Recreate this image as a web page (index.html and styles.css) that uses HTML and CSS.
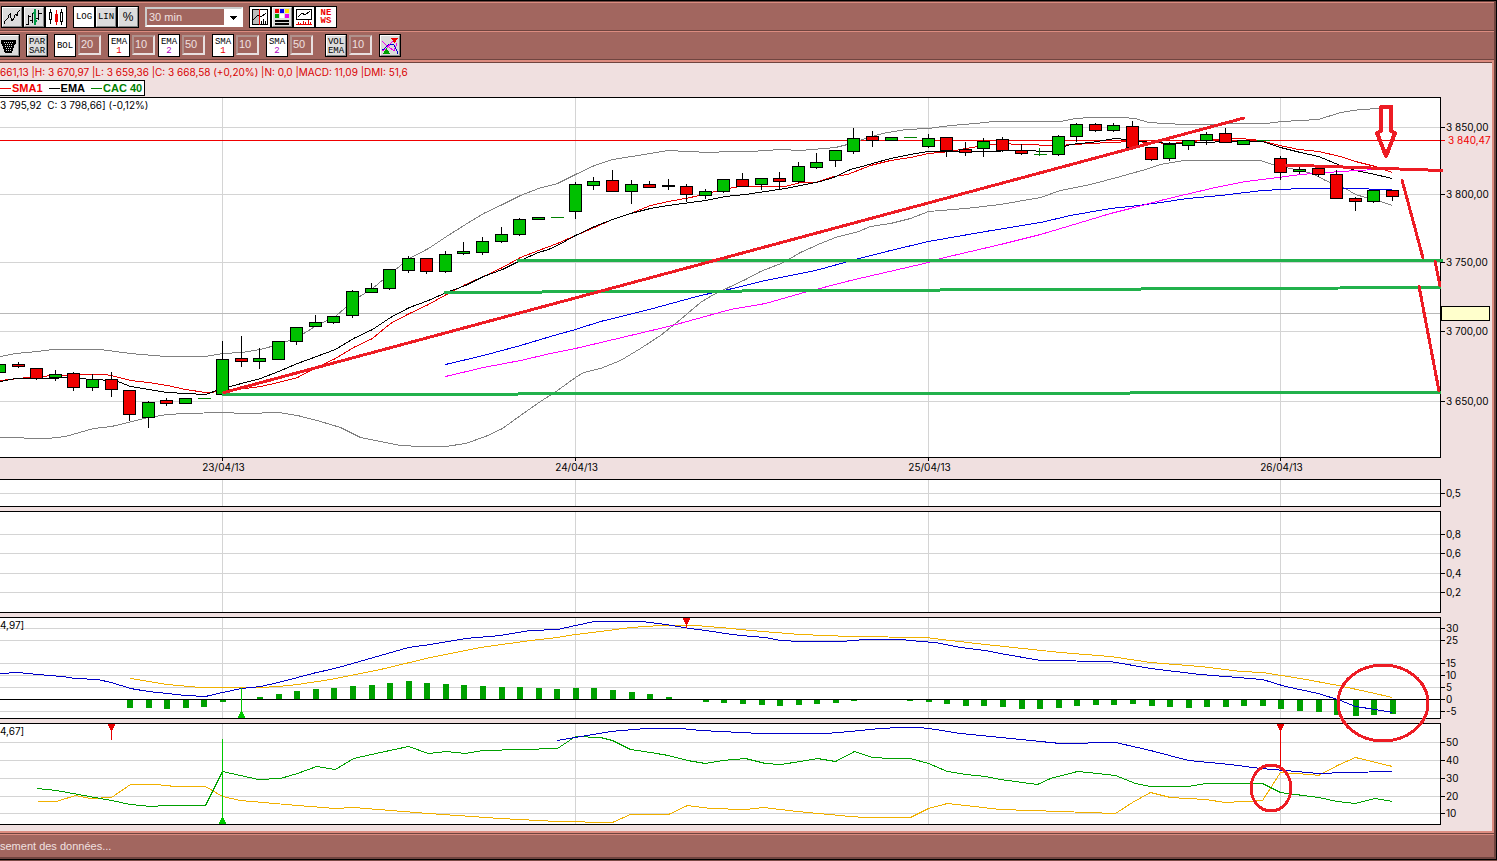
FILE: index.html
```
<!DOCTYPE html>
<html lang="fr">
<head>
<meta charset="utf-8">
<title>CAC 40</title>
<link rel="stylesheet" href="styles.css">
</head>
<body>
<div class="app">
  <div class="toolbar" role="toolbar" aria-label="Affichage">
    <div class="group">
      <button class="tool" aria-label="Courbe"><svg viewBox="0 0 18 18"><path d="M1 16V13H2L5 10V8L7 6V9L8 10L9 13L11 10V8L13 6L14 8V5L17 2" class="ink"/></svg></button>
      <button class="tool" aria-label="Barres"><svg viewBox="0 0 18 18"><path d="M3.5 7V17M1 16.5H3M4 8.5H6M7.5 5V15M5 12.500H7M13.500 2V12M11 10.500H13M14 5.500H17" class="ink"/><path d="M10 1V17M8 5H10M10 13H12" class="bar-green"/></svg></button>
      <button class="tool on" aria-label="Chandeliers"><svg viewBox="0 0 18 18"><path d="M3.500 1V4M3.500 12V16M2.500 4.500H4.500V11.500H2.500ZM14.500 1V4M14.500 13V17M13.500 4.500H15.500V13.500H13.500Z" class="ink"/><path d="M9.500 2V17" class="ink-red"/><path d="M8 6H11V14H8Z" class="fill-red"/></svg></button>
    </div>
    <div class="group group-scale">
      <button class="tool on wide">LOG</button>
      <button class="tool wide">LIN</button>
      <button class="tool percent">%</button>
    </div>
    <select class="period" aria-label="Période"><option>30 min</option></select>
    <div class="group group-view">
      <button class="tool on" aria-label="Curseur"><svg viewBox="0 0 18 18"><path d="M2 2H8V16H2Z" class="fill-gray"/><path d="M1.500 1.500H16.500V16.500H1.500ZM2 12L7 7L10 9L15 5M10.500 13V16M12.500 11V16M14.500 13V16" class="ink"/><path d="M8.500 1V17" class="ink-red"/></svg></button>
      <button class="tool" aria-label="Couleurs"><svg viewBox="0 0 18 18"><path d="M2 1H6V5H2Z" class="fill-red"/><path d="M7 1H11V5H7Z" class="fill-blue"/><path d="M12 1H16V5H12Z" class="fill-yellow"/><path d="M2 6H6V10H2Z" class="fill-green"/><path d="M7 6H11V10H7Z" class="fill-white"/><path d="M12 6H16V10H12Z" class="fill-magenta"/><path d="M2 12H16V14H2ZM2 15H16V17H2Z"/></svg></button>
      <button class="tool on" aria-label="Volume"><svg viewBox="0 0 18 18"><path d="M1.500 1.500H16.500V11.500H1.500ZM3 9L7 5L10 7L15 3" class="ink"/><path d="M1 16.500H17M3.500 14V16M5.500 15V16M8.500 13V16M10.500 14V16M13.500 12V16M15.500 14V16" class="ink-red"/></svg></button>
      <button class="tool on news" aria-label="News"><span>NE</span><span>WS</span></button>
    </div>
  </div>

  <div class="toolbar indicators" role="toolbar" aria-label="Indicateurs">
    <button class="tool bin" aria-label="Effacer"><svg viewBox="0 0 18 18"><path d="M1 3H16V7H15L12 16H5L2 7H1Z"/><path d="M4 5.500H13M5 7.500H13M5 9.500H12M6 11.500H12M6 13.500H11" class="mesh"/></svg></button>
    <button class="tool two"><span>PAR</span><span>SAR</span></button>
    <div class="field"><button class="tool on wide">BOL</button><input value="20" aria-label="Bollinger"></div>
    <div class="group-avg">
      <div class="field"><button class="tool on two"><span>EMA</span><span class="one">1</span></button><input value="10" aria-label="EMA 1"></div>
      <div class="field"><button class="tool on two"><span>EMA</span><span class="second">2</span></button><input value="50" aria-label="EMA 2"></div>
    </div>
    <div class="field"><button class="tool on two"><span>SMA</span><span class="one">1</span></button><input value="10" aria-label="SMA 1"></div>
    <div class="field"><button class="tool on two"><span>SMA</span><span class="second">2</span></button><input value="50" aria-label="SMA 2"></div>
    <div class="field volume"><button class="tool two"><span>VOL</span><span>EMA</span></button><input value="10" aria-label="Volume EMA"></div>
    <button class="tool" aria-label="Signaux"><svg viewBox="0 0 18 18"><path d="M1 4L4 7L13 14L16 6" class="ink-magenta"/><path d="M1 12H3L7 8L10 7L13 8L16 14V17" class="ink-blue"/><path d="M1 14L5 12L11 5L15 3" class="ink-magenta"/><path d="M10 1H17L13.500 6Z" class="fill-red"/><path d="M2 17H9L5.500 11Z" class="fill-green"/></svg></button>
  </div>

  <main class="workspace">
    <div class="readout">661,13 |H: 3 670,97 |L: 3 659,36 |C: 3 668,58 (+0,20%) |N: 0,0 |MACD: 11,09 |DMI: 51,6</div>
    <div class="legend">
      <span class="key key-sma">SMA1</span>
      <span class="key key-ema">EMA</span>
      <span class="key key-cac">CAC 40</span>
    </div>
    <svg class="chart" id="chart" viewBox="0 97 1492 734" role="img" aria-label="CAC 40, 30 min"></svg>
  </main>

  <footer class="status">sement des données...</footer>
</div>
<script src="chart.js"></script>
</body>
</html>
```
FILE: styles.css
```
* { box-sizing: border-box; }

body {
  margin: 0;
  padding-bottom: 1px;
  background: #7a4a45;
  font-family: "Liberation Sans", Arial, sans-serif;
  font-size: 11px;
  color: #000;
}

.app {
  display: flex;
  flex-direction: column;
  min-height: calc(100vh - 1px);
  border: solid #000;
  border-width: 1px 1px 1px 0;
  padding: 1px 2px 0 0;
  background: #6f443f;
  overflow: hidden;
}

.toolbar {
  display: flex;
  align-items: center;
  height: 29px;
  padding-left: 2px;
  background: #a2665f;
  border-top: 1px solid #dc8c80;
  border-bottom: 1px solid #6f443f;
}

.group { display: flex; gap: 2px; }
.group-scale { margin-left: 8px; }
.group-view { margin-left: 7px; }

.tool {
  display: flex;
  flex-direction: column;
  align-items: center;
  justify-content: center;
  width: 20px;
  height: 20px;
  padding: 0;
  border: 1px solid;
  border-color: #fff #888 #888 #fff;
  background: #dcdcdc;
  box-shadow: 0 0 0 1px #000;
  font: 9px/9px "Liberation Mono", monospace;
  color: #000;
}
.tool.on { background: #fff; border-color: #fff; }
.tool svg { width: 18px; height: 18px; display: block; shape-rendering: crispEdges; }
.wide, .two { padding-top: 2px; }
.percent { font: 12px/12px "Liberation Sans", Arial, sans-serif; }
.news { padding-top: 1px; color: #e00; font-weight: bold; line-height: 8px; }
.bin { margin-left: -1px; }
.one { color: #e00; }
.second { color: #b000c0; }

.ink, .ink-red, .ink-blue, .ink-magenta, .bar-green, .mesh { fill: none; stroke: #000; }
.ink-red { stroke: #e00; }
.ink-blue { stroke: #00c; }
.ink-magenta { stroke: #e0e; }
.bar-green { stroke: #009a46; stroke-width: 2; }
.mesh { stroke: #dcdcdc; stroke-dasharray: 1 1; }
.fill-red { fill: #e00; }
.fill-blue { fill: #00e; }
.fill-green { fill: #00a000; }
.fill-yellow { fill: #ffe000; }
.fill-magenta { fill: #e0e; }
.fill-white { fill: #fff; }
.fill-gray { fill: #bbb; }

.period {
  appearance: none;
  width: 98px;
  height: 20px;
  margin-left: 7px;
  padding: 0 2px;
  border: 2px solid #fff;
  border-color: #ccc #fff #fff #ccc;
  border-radius: 0;
  background:
    conic-gradient(from -45deg at 50% 100%, #000 90deg, transparent 0) no-repeat right 4px top 7px / 8px 4px,
    linear-gradient(to left, #fff 17px, #a2665f 17px);
  color: #f0e0e0;
  font: 11px "Liberation Sans", Arial, sans-serif;
}

.indicators { gap: 8px; padding-left: 0; }
.indicators .tool { height: 21px; }
.group-avg { display: flex; gap: 4px; }
.field { display: flex; gap: 3px; }
.field input {
  width: 23px;
  height: 20px;
  padding: 0 1px 2px;
  border: 2px solid;
  border-color: #b0918c #e8e0e0 #e8e0e0 #b0918c;
  background: #a2665f;
  color: #f0e0e0;
  font: 11px "Liberation Sans", Arial, sans-serif;
}
.volume { margin-left: 5px; }

.workspace {
  flex: 1;
  border: solid #dc8c80;
  border-width: 2px 2px 2px 0;
  background: #f0e0e0;
}
.readout {
  padding-top: 2px;
  border-top: 1px solid #6f443f;
  font: 10px/15px Inter, sans-serif;
  color: #d80000;
  white-space: pre;
}
.legend {
  display: flex;
  align-items: center;
  gap: 6px;
  width: max-content;
  height: 16px;
  margin-bottom: 1px;
  padding-right: 2px;
  border: 1px solid #000;
  border-left: 0;
  background: #fff;
  font-weight: bold;
}
.key { display: flex; align-items: center; gap: 1px; }
.key::before { content: ""; width: 11px; height: 1px; background: currentColor; }
.key-sma { color: #f00000; }
.key-cac { color: #008000; }

.chart { display: block; width: 100%; height: auto; font: 10px Inter, sans-serif; }
.chart .axis-text { fill: #000; }
.chart .price { fill: #f00000; }
.crisp { shape-rendering: crispEdges; }
.panel { fill: #fff; }
.frame { fill: none; stroke: #000; }
.grid { stroke: #d4d4d4; }
.tick, .wick { stroke: #000; }
.cursor { stroke: #b8b8b8; }
.last { stroke: #f00000; }
.tag { fill: #ffffcc; stroke: #000; }
.line { fill: none; stroke-width: 1; }
.band { stroke: #808080; }
.sma { stroke: #e80000; }
.ema { stroke: #000; }
.blue { stroke: #0000e8; }
.pink { stroke: #ff00ff; }
.orange { stroke: #f0b000; }
.green { stroke: #00a000; }
.navy { stroke: #0000c8; }
.body { stroke: #000; }
.up { fill: #00c000; }
.down { fill: #f00000; }
.flat { stroke: #008000; }
.histo { fill: #00a000; }
.sell { fill: #e80000; stroke: #e80000; }
.buy { fill: #00c800; stroke: #00c800; }
.pen { fill: none; stroke: #ed1c24; stroke-width: 3; stroke-linecap: round; }
.arrow { stroke-width: 4; stroke-linejoin: round; }
.level { fill: none; stroke: #22b14c; stroke-width: 3; }

.status {
  height: 26px;
  padding-top: 1px;
  border: solid #6f443f;
  border-width: 1px 0 2px;
  background: #a2665f;
  box-shadow: inset 0 1px #dc8c80;
  color: #f0e0e0;
  font-size: 11px;
  line-height: 23px;
}
```
FILE: chart.js
```
const RIGHT = 1440.5;
const barX = k => Math.round(222 + k * 18.57) + 0.5;

const panels = [
  { top: 97.5, bottom: 457.5, ticks: [[127.5, "3 850,00"], [194.5, "3 800,00"], [262.5, "3 750,00"], [331.5, "3 700,00"], [401.5, "3 650,00"]] },
  { top: 479.5, bottom: 506.5, ticks: [[493.5, "0,5"]] },
  { top: 511.5, bottom: 612.5, ticks: [[534.5, "0,8"], [553.5, "0,6"], [573.5, "0,4"], [592.5, "0,2"]] },
  { top: 617.5, bottom: 718.5, ticks: [[628.5, "30"], [640.5, "25"], [663.5, "15"], [675.5, "10"], [687.5, "5"], [699.5, "0"], [711.5, "-5"]] },
  { top: 723.5, bottom: 824.5, ticks: [[742.5, "50"], [760.5, "40"], [778.5, "30"], [796.5, "20"], [813.5, "10"]] }
];
const days = [[222.5, "23/04/13"], [575.5, "24/04/13"], [928.5, "25/04/13"], [1280.5, "26/04/13"]];

// One row per bar from index -12: direction, body top, body bottom, high, low
const candles = [
  ["up",364,372,357,372],["down",364,366,362,368],["down",368,378,368,380],["up",374,377,370,381],["down",373,387,372,391],
  ["up",379,387,374,391],["down",379,389,372,397],["down",390,414,390,421],["up",402,417,401,428],["down",400,403,398,406],
  ["up",398,403,398,403],["flat",398,398,398,398],
  ["up",359,394,341,394],["down",358,361,336,367],["up",358,361,348,369],["up",341,359,341,359],["up",327,341,327,345],
  ["up",322,326,315,326],["up",316,322,316,324],["up",291,315,290,318],["up",288,292,283,292],["up",269,288,269,290],
  ["up",258,270,256,273],["down",258,271,258,274],["up",254,271,251,273],["up",251,253,242,255],["up",241,252,237,255],
  ["up",234,241,227,243],["up",219,234,218,236],["up",217,219,217,219],["flat",217,217,217,217],
  ["up",184,211,182,219],["up",181,185,177,190],["down",180,191,170,191],["up",184,191,180,204],["down",184,187,181,187],
  ["down",185,186,179,190],["down",186,194,184,202],["up",191,195,189,199],["up",179,191,179,193],["down",179,186,173,186],
  ["up",178,184,178,190],["down",178,181,172,190],["up",166,181,162,183],["up",162,167,153,169],["up",150,160,150,167],
  ["up",138,151,128,154],["down",136,140,131,147],["up",137,140,137,140],["flat",137,137,137,137],
  ["up",138,146,134,148],["down",137,150,137,157],["down",149,152,142,156],["up",141,148,138,157],["down",139,150,137,152],
  ["down",150,153,144,155],["flat",154,154,148,156],["up",136,154,135,156],["up",124,136,123,142],["down",124,130,123,132],
  ["up",125,130,123,132],["down",126,147,121,147],["down",147,159,147,161],["up",144,158,142,161],["up",140,145,140,150],
  ["up",134,140,132,145],["down",133,142,128,142],["up",140,144,140,144],["flat",140,140,140,140],
  ["down",158,172,156,180],["up",169,171,167,174],["down",168,174,168,177],["down",174,198,170,198],["down",198,201,197,211],
  ["up",190,201,190,203],["down",190,196,190,201]
];

// MACD histogram ends, one per bar from index -5; 0 means no bar
const histogram = [708,708,709,708,707,702,0,697,694,691,689,688,686,685,683,681,683,684,685,686,687,687,688,689,688,688,690,692,694,697,
  0,702,703,704,705,706,705,704,703,701,0,0,701,702,704,706,706,707,709,709,708,706,705,705,704,706,707,708,707,707,706,706,709,711,712,715,716,715,714];

const priceLines = [
  ["band", "0,356 15,353 37,351 52,349 100,349 115,351 130,353 165,356 205,356 222,353 242,352 260,349 278,344 297,337 316,325 335,316 353,300 372,288 390,273 409,258 428,248 446,236 465,224 483,213 502,204 520,195 538,188 557,183 575,174 594,165 612,159 650,153 668,150 687,151 709,152 728,151 750,151 780,149 800,150 835,147 847,144 865,138 882,133 905,129 928,128 950,125 975,123 993,121 1060,121 1075,118 1090,117 1122,117 1135,118 1148,122 1165,123 1183,124 1265,123 1282,121 1318,119 1340,112 1360,109 1380,108"],
  ["band", "0,437 47,438 65,436 93,428 111,426 148,417 167,414 185,413 222,412 245,413 278,412 297,415 320,421 340,427 360,437 380,441 400,445 420,446 445,446 465,443 485,436 502,428 520,415 540,401 557,390 575,377 583,372 600,368 620,360 640,348 660,335 680,319 700,302 715,293 728,287 745,279 760,271 783,262 800,252 820,243 835,237 858,231 870,226 890,223 910,218 928,211 965,208 1000,204 1040,197 1060,190 1090,184 1120,176 1145,169 1160,164 1183,160 1260,160 1272,164 1290,168 1312,173 1325,180 1345,188 1355,194 1365,197 1380,201 1392,205"],
  ["sma", "0,380 18,378 37,376 56,375 80,374 105,374 115,376 130,380 148,382 167,385 185,389 205,392 222,391 260,386 278,382 297,377 316,367 335,358 353,347 372,338 390,323 409,313 428,304 446,294 465,284 483,276 502,267 520,257 538,250 557,243 575,235 594,227 612,219 630,213 650,205 668,201 690,197 715,191 728,188 740,186 785,186 800,182 815,182 833,176 847,174 870,165 890,160 910,157 928,153 950,151 965,148 985,145 1000,143 1020,144 1057,145 1090,143 1110,142 1132,141 1170,143 1212,139 1240,138 1260,140 1275,144 1298,149 1318,151 1340,156 1355,161 1375,166 1392,172"],
  ["ema", "0,381 15,378 47,378 70,377 90,379 115,380 130,386 148,389 167,392 185,393 205,394 222,388 260,378 278,371 297,363 316,356 335,349 353,338 372,329 390,317 409,307 428,300 446,292 465,285 483,276 502,269 520,260 538,252 548,249 557,245 575,235 594,226 612,219 630,213 650,208 668,205 690,202 705,200 725,196 745,194 765,191 785,188 800,185 820,181 833,177 850,169 865,165 890,158 910,154 928,151 980,151 1020,150 1050,151 1070,144 1090,142 1115,138 1135,140 1150,142 1175,143 1200,142 1230,141 1262,141 1280,147 1300,152 1318,156 1340,165 1355,170 1370,173 1392,178"],
  ["blue", "445,364 483,355 520,345 550,336 575,329 600,321 645,310 700,295 728,289 765,280 815,270 855,259 890,250 928,241 985,231 1040,222 1070,215 1110,208 1130,206 1160,202 1187,198 1220,195 1262,190 1300,188 1345,188 1392,189"],
  ["pink", "445,376 483,367 520,360 550,353 575,348 630,335 672,325 730,309 765,303 800,293 850,280 928,262 940,258 1000,244 1040,234 1077,223 1110,213 1130,208 1160,200 1185,194 1215,187 1245,181 1270,178 1300,174 1340,171 1375,169"]
];
const macdLines = [
  ["orange", "130,678 148,681 167,684 200,687 260,687 278,686 297,684 330,679 380,669 430,657 480,647 530,640 557,637 575,634 600,631 630,627 660,625 695,625 720,627 750,630 800,634 850,636 925,637 950,640 985,644 1060,652 1110,656 1150,662 1200,666 1240,671 1262,672 1300,678 1338,685 1370,692 1392,697"],
  ["navy", "0,673 18,672 37,674 62,676 75,678 97,679 111,682 130,688 148,691 167,693 185,695 205,696 222,692 241,688 260,686 278,682 297,677 316,672 330,669 345,665 380,655 408,647 430,644 465,638 500,635 530,630 557,629 575,625 594,621 642,621 665,624 690,628 705,630 725,633 740,635 765,637 780,640 800,641 840,641 865,639 900,639 920,641 935,642 960,647 985,650 1000,653 1040,660 1110,661 1150,668 1200,674 1262,679 1285,686 1318,693 1340,700 1355,706 1375,709 1392,712"]
];
const dmiLines = [
  ["orange", "37,801 56,801 75,795 90,798 111,797 130,784 155,784 175,786 205,786 222,796 240,800 297,805 335,808 353,807 428,813 500,818 557,821 612,822 630,814 668,814 687,805 710,808 745,809 763,807 797,811 850,816 865,817 910,817 928,808 947,803 965,805 1000,809 1060,811 1115,813 1132,802 1150,792 1170,797 1205,799 1225,802 1243,801 1262,800 1280,772 1310,774 1318,775 1337,765 1355,757 1392,766"],
  ["green", "37,788 56,790 111,800 130,804 150,806 165,805 205,805 222,771 258,779 280,778 297,773 316,766 335,769 353,758 380,752 408,746 428,753 446,751 465,753 483,750 557,748 575,736 600,737 612,740 630,749 650,752 668,755 687,760 705,763 722,760 745,758 765,763 780,764 800,761 817,758 835,761 854,751 872,757 890,758 910,758 928,763 947,771 965,774 985,776 1000,779 1037,784 1050,778 1077,771 1097,773 1115,775 1135,783 1150,786 1188,786 1205,783 1262,783 1280,792 1318,797 1337,801 1355,803 1374,798 1392,801"],
  ["navy", "557,740 575,737 610,731 645,728 680,728 700,730 760,733 825,733 850,731 880,728 900,727 920,727 935,729 960,733 1000,737 1060,743 1115,742 1150,750 1188,760 1230,764 1260,768 1285,770 1318,773 1345,772 1392,771"]
];

const line = (x1, y1, x2, y2, cls) => `<line x1="${x1}" y1="${y1}" x2="${x2}" y2="${y2}" class="${cls}"/>`;
const path = (d, cls) => `<path d="${d}" class="${cls}"/>`;
const text = (x, y, value, cls = "axis-text", anchor = "start") => `<text x="${x}" y="${y}" class="${cls}" text-anchor="${anchor}" xml:space="preserve">${value}</text>`;
const curve = ([cls, points]) => {
  const shifted = points.split(" ").map(p => p.split(",").map(v => Number(v) + 0.5).join(",")).join(" ");
  return `<polyline points="${shifted}" class="line ${cls}"/>`;
};

function drawPanel(p) {
  let out = `<rect x="0" y="${p.top}" width="${RIGHT}" height="${p.bottom - p.top}" class="panel"/>`;
  p.ticks.forEach(([y]) => { out += line(0, y, RIGHT, y, "grid"); });
  days.forEach(([x]) => { out += line(x, p.top, x, p.bottom, "grid"); });
  return out;
}

function drawFrame(p) {
  let out = path(`M0 ${p.top}H${RIGHT}V${p.bottom}H0`, "frame");
  p.ticks.forEach(([y]) => { out += line(RIGHT, y, RIGHT + 4, y, "tick"); });
  return out;
}

function drawCandle([kind, top, bottom, high, low], i) {
  const x = barX(i - 12);
  if (kind === "flat") {
    return line(x - 6, top + 0.5, x + 7, top + 0.5, "flat") + (high < low ? line(x, high, x, low, "flat") : "");
  }
  return line(x, high, x, low, "wick") +
    `<rect x="${x - 6}" y="${top + 0.5}" width="12" height="${bottom - top}" class="body ${kind}"/>`;
}

function drawBar(end, i) {
  if (!end) return "";
  return `<rect x="${barX(i - 5) - 2.5}" y="${Math.min(end, 699)}" width="6" height="${Math.abs(end - 699)}" class="histo"/>`;
}

const sell = (x, y, end) => path(`M${x - 3} ${y}H${x + 3}L${x} ${y + 6}Z`, "sell") + line(x, y, x, end, "sell");
const buy = (x, y, start) => path(`M${x - 3} ${y}H${x + 3}L${x} ${y - 6}Z`, "buy") + line(x, y, x, start, "buy");

const crisp = [
  ...panels.map(drawPanel),
  line(0, 313.5, RIGHT, 313.5, "cursor"),
  line(0, 140.5, RIGHT + 4, 140.5, "last"),
  ...priceLines.map(curve),
  ...candles.map(drawCandle),
  ...histogram.map(drawBar),
  line(0, 699.5, RIGHT, 699.5, "tick"),
  ...macdLines.map(curve),
  ...dmiLines.map(curve),
  sell(111.5, 724.5, 740), sell(686.5, 618.5, 628), sell(1280.5, 724.5, 767),
  buy(241.5, 717.5, 688), buy(222.5, 823.5, 739),
  ...panels.map(drawFrame),
  ...days.map(([x]) => line(x, 458, x, 461, "tick")),
  '<rect x="1441.5" y="306.5" width="48" height="14" class="tag"/>',
  path("M517 260.5H1443", "level"),
  path("M444 292.500L1441 287.500", "level"),
  path("M222 394.500L1441 392.500", "level"),
  path("M224 392.500L1244 118", "pen"),
  path("M1286 165L1442 170.500", "pen"),
  path("M1402 180L1423 258M1435 261L1440 286M1419 286L1439 391", "pen"),
  path("M1381 107H1391V131L1395 133L1386 156L1377 133L1381 131Z", "pen arrow"),
  '<ellipse cx="1383" cy="703" rx="45" ry="38" class="pen"/>',
  '<ellipse cx="1271" cy="788" rx="20" ry="23" class="pen"/>'
].join("");

const labels = [
  ...panels.flatMap(p => p.ticks.map(([y, value]) => text(1446, y + 3.5, value))),
  text(1448, 144, "3 840,47", "price"),
  ...days.map(([x, value]) => text(x + 1, 471, value, "axis-text", "middle")),
  text(0, 109, "3 795,92  C: 3 798,66] (-0,12%)"),
  text(0, 629, "4,97]"),
  text(0, 735, "4,67]")
].join("");

document.getElementById("chart").innerHTML = `<g class="crisp">${crisp}</g><g>${labels}</g>`;
```
